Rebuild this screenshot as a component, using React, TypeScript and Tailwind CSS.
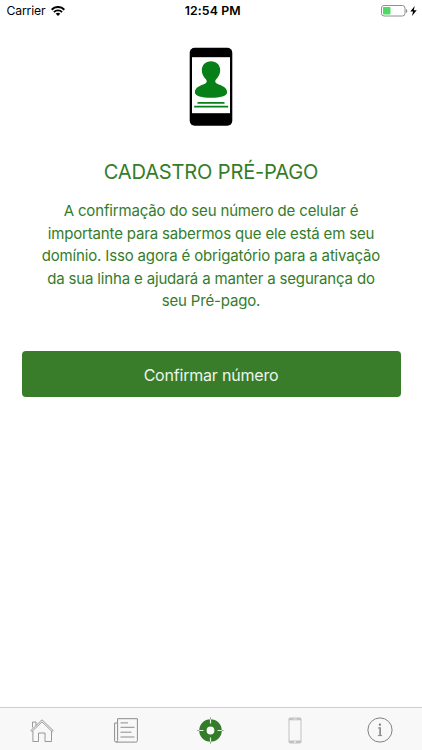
import type { ReactNode } from 'react';

const messageLines = [
  'A confirmação do seu número de celular é',
  'importante para sabermos que ele está em seu',
  'domínio. Isso agora é obrigatório para a ativação',
  'da sua linha e ajudará a manter a segurança do',
  'seu Pré-pago.',
];

function StatusBar() {
  return (
    <header className="grid h-[22px] grid-cols-3 items-center pr-[5px] pl-[6.5px] text-black">
      <div className="flex items-center gap-[6px]">
        <span className="text-[12.2px] leading-[22px] tracking-[-0.15px]">Carrier</span>
        <svg width="14" height="10" viewBox="0 0 14 10" fill="none" stroke="black">
          <path d="M0.6 3.7a8.9 8.9 0 0 1 12.8 0" strokeWidth="2" />
          <path d="M2.9 6.1a5.7 5.7 0 0 1 8.2 0" strokeWidth="1.8" />
          <path d="M4.7 7.8a3 3 0 0 1 4.6 0L7 10z" fill="black" stroke="none" />
        </svg>
      </div>
      <span className="pl-[2px] text-center text-[12.3px] leading-[22px] font-semibold tracking-[0.12px] whitespace-nowrap">12:54 PM</span>
      <div className="flex items-center justify-end gap-[2px]">
        <svg width="27" height="12" viewBox="0 0 27 12">
          <rect x="0.5" y="0.5" width="23.5" height="10.5" rx="2.6" fill="white" stroke="#8e8e8e" />
          <rect x="2" y="2" width="7.5" height="7.5" rx="1" fill="#4cd964" />
          <path d="M25 4v4c1.8-.7 1.8-3.3 0-4z" fill="#8e8e8e" />
        </svg>
        <svg width="7" height="10" viewBox="0 0 7 10">
          <path d="M4.7 0 .3 5.5h2.8L2 10l4.7-5.8H3.8z" fill="black" />
        </svg>
      </div>
    </header>
  );
}

function PhoneContactIcon() {
  return (
    <svg width="44" height="79" viewBox="0 0 44 79">
      <rect x="0.7" y="0.7" width="42.6" height="78" rx="5" fill="black" />
      <rect x="3" y="10.2" width="38" height="56" fill="white" />
      <path
        d="M22 14.3c-5.4 0-9.2 3.8-9.2 9 0 3.8 1.8 6.7 4.1 9 1.3 1.5 1.3 3.2-1 4.4-4.3 1.8-10 3.400-10 8.600 0 4 7 5.500 16.100 5.500s16.100-1.500 16.100-5.500c0-5.200-5.700-6.800-10-8.600-2.300-1.200-2.300-2.900-1-4.400 2.300-2.300 4.100-5.200 4.100-9 0-5.200-3.800-9-9.200-9z"
        fill="#078018"
      />
      <path d="M8.5 55.9h27M5.2 59.7h34" stroke="#078018" strokeWidth="1.7" />
    </svg>
  );
}

function HomeIcon() {
  return (
    <svg width="24" height="25" viewBox="0 0 24 25" fill="none" stroke="#8d8d8d" strokeWidth="0.9">
      <path d="M.8 12.5 12 1.8 23.2 12.5l-1 1.1L12 3.9 1.8 13.6z" />
      <path d="M2.5 9.5V4H6v3.3M2.9 13v10.5h5.6V15h6.5v8.5h6.5V13" />
    </svg>
  );
}

function NewsIcon() {
  return (
    <svg className="mr-px" width="24" height="25" viewBox="0 0 24 25" fill="none" stroke="#8d8d8d" strokeWidth="1">
      <path d="M3.5 5H.6v17.7q0 1.4 1.6 1.4h19.6q1.6 0 1.6-1.6V.7H3.6v21.8q0 1.6-1.5 1.6" />
      <path d="M6.5 4.9H14M6.5 9.3h14M6.5 14.2h11M6.5 19h14" />
    </svg>
  );
}

function TargetIcon() {
  return (
    <svg width="27" height="27" viewBox="0 0 27 27">
      <circle cx="13.5" cy="13.5" r="7.6" fill="none" stroke="#347c2a" strokeWidth="7.4" />
      <path d="M13.5 2v4.5M13.5 20.5v4.5M2 13.5h4.5M20.5 13.5h4.5" stroke="#e3eee1" strokeWidth="1.2" />
      <path d="M13.5.3v2M13.5 24.7v2M.3 13.5h2M24.7 13.5h2" stroke="#83ad7c" strokeWidth="1" />
    </svg>
  );
}

function MobileIcon() {
  return (
    <svg width="14" height="27" viewBox="0 0 14 27">
      <rect x="0.5" y="0.5" width="13" height="26" rx="1.8" fill="#c2c2c2" />
      <rect x="1.5" y="3.3" width="11" height="20.2" fill="#f8f8f8" />
      <path d="M5 2h4" stroke="#f0f0f0" strokeWidth="0.7" />
      <circle cx="7" cy="25" r="0.9" fill="#f0f0f0" />
    </svg>
  );
}

function InfoIcon() {
  return (
    <svg width="26" height="26" viewBox="0 0 26 26">
      <circle cx="13" cy="13" r="12.1" fill="none" stroke="#747474" strokeWidth="0.9" />
      <circle cx="12.9" cy="7.7" r="1.1" fill="#747474" />
      <path d="M10.9 11.1l2.5-.5M10.9 18.6h4.3" fill="none" stroke="#747474" strokeWidth="0.8" />
      <path d="M13.1 10.5v8" stroke="#747474" strokeWidth="1.4" />
    </svg>
  );
}

function TabItem({ label, children }: { label: string; children: ReactNode }) {
  return (
    <button aria-label={label} className="flex items-center justify-center">
      {children}
    </button>
  );
}

export default function App() {
  return (
    <div className="flex h-screen flex-col bg-white font-['Inter',sans-serif]">
      <StatusBar />

      <main className="flex flex-1 flex-col items-center px-[21.5px] pt-[25px] text-[#347c2a]">
        <PhoneContactIcon />
        <h1 className="mt-[32px] text-[20.1px] leading-[28px] tracking-[-0.18px] whitespace-nowrap">CADASTRO PRÉ-PAGO</h1>
        <p className="mt-[14.3px] text-center text-[15px] leading-[22.4px] tracking-[-0.16px] whitespace-nowrap">
          {messageLines.map((line) => (
            <span key={line} className="block">{line}</span>
          ))}
        </p>
        <button className="mt-[38.7px] h-[46px] w-full rounded-[4px] bg-[#397d2b] pt-[2px] text-[16px] tracking-[-0.2px] text-[#edf5eb]">
          Confirmar número
        </button>
      </main>

      <nav className="grid h-[43px] grid-cols-5 border-t border-[#cfcfcf] bg-[#f8f8f8] pt-[2px]">
        <TabItem label="Início"><HomeIcon /></TabItem>
        <TabItem label="Notícias"><NewsIcon /></TabItem>
        <TabItem label="Cadastro"><TargetIcon /></TabItem>
        <TabItem label="Celular"><MobileIcon /></TabItem>
        <TabItem label="Informações"><InfoIcon /></TabItem>
      </nav>
    </div>
  );
}
